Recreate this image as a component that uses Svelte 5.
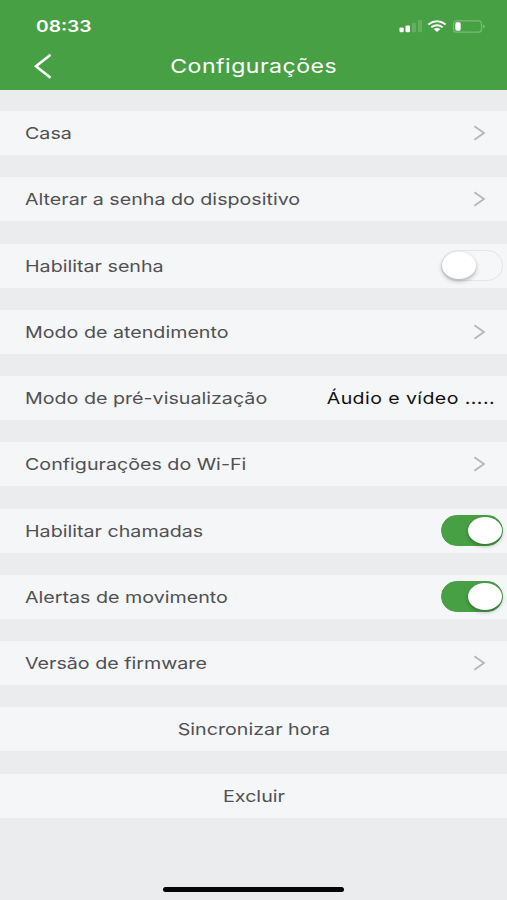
<!--
  Device settings screen: green status/title header, then a stack of setting bars.
  A bar ends in a chevron, a toggle or a value; the last two are centred actions.
-->
<script lang="ts">
  type Row = {
    label: string;
    kind: 'link' | 'toggle' | 'value' | 'action';
    on?: boolean;
    value?: string;
  };

  let rows = $state<Row[]>([
    { label: 'Casa', kind: 'link' },
    { label: 'Alterar a senha do dispositivo', kind: 'link' },
    { label: 'Habilitar senha', kind: 'toggle', on: false },
    { label: 'Modo de atendimento', kind: 'link' },
    { label: 'Modo de pré-visualização', kind: 'value', value: 'Áudio e vídeo .....' },
    { label: 'Configurações do Wi-Fi', kind: 'link' },
    { label: 'Habilitar chamadas', kind: 'toggle', on: true },
    { label: 'Alertas de movimento', kind: 'toggle', on: true },
    { label: 'Versão de firmware', kind: 'link' },
    { label: 'Sincronizar hora', kind: 'action' },
    { label: 'Excluir', kind: 'action' }
  ]);
</script>

<div class="screen">
  <header>
    <div class="status">
      <span class="time">08:33</span>
      <svg class="indicators" width="88" height="20" viewBox="0 0 88 20">
        <g fill="#fff">
          <rect x="0.5" y="11.4" width="4.2" height="4.8" rx="1.2" />
          <rect x="6.5" y="9.4" width="4.5" height="6.8" rx="1.2" />
          <rect x="13" y="7" width="4" height="9.2" rx="1" opacity="0.16" />
          <rect x="19" y="4" width="4" height="12.2" rx="1" opacity="0.16" />
          <path d="M34.6 12.9q3.4-2 6.8 0l-3.4 3z" />
        </g>
        <g fill="none" stroke="#fff" stroke-width="2">
          <path d="M29.3 8.5q8.7-6.4 17.4 0" />
          <path d="M32.3 11.2q5.7-4 11.4 0" />
        </g>
        <rect x="54.5" y="4.8" width="28" height="11.4" rx="3" fill="none" stroke="#fff" stroke-width="1.2" opacity="0.28" />
        <rect x="56.3" y="6.3" width="5.4" height="8.4" rx="1.6" fill="#fff" />
        <path d="M84.4 8.5q2.4 2 0 4z" fill="#fff" opacity="0.45" />
      </svg>
    </div>
    <div class="titlebar">
      <button class="back" aria-label="Voltar">
        <svg width="20" height="28" viewBox="0 0 20 28">
          <path d="M17.5 2.8 3 14.2l14.5 11.6" fill="none" stroke="#fff" stroke-width="2.6" />
        </svg>
      </button>
      <h1><span class="wide">Configurações</span></h1>
    </div>
  </header>

  <main>
    {#each rows as row (row.label)}
      <div class="row {row.kind}">
        <span class="label">{row.label}</span>
        {#if row.kind === 'link'}
          <svg class="chevron" width="14" height="18" viewBox="0 0 14 18">
            <path d="M2.4 2.2 12 9l-9.6 6.8" fill="none" stroke="#b5b6b8" stroke-width="1.8" />
          </svg>
        {:else if row.kind === 'toggle'}
          <button
            class="switch"
            class:on={row.on}
            role="switch"
            aria-checked={row.on}
            aria-label={row.label}
            onclick={() => (row.on = !row.on)}
          >
            <span class="knob"></span>
          </button>
        {:else if row.kind === 'value'}
          <span class="val">{row.value}</span>
        {/if}
      </div>
    {/each}
  </main>

  <footer><div class="home"></div></footer>
</div>

<style>
  :global(body) {
    margin: 0;
  }
  .screen {
    display: flex;
    flex-direction: column;
    height: 900px;
    overflow: hidden;
    background: #ebecee;
    font-family: Inter, 'Liberation Sans', sans-serif;
    color: #505153;
  }
  header {
    flex: none;
    height: 89.5px;
    box-sizing: border-box;
    padding-top: 12px;
    background: #48a045;
    color: #fff;
  }
  .status {
    display: flex;
    justify-content: space-between;
    align-items: center;
    height: 28px;
    padding: 0 20px 0 36px;
  }
  .time {
    font-size: 16px;
    font-weight: 600;
    transform: scaleX(1.2);
    transform-origin: left;
  }
  .indicators {
    display: block;
  }
  .titlebar {
    display: grid;
    grid-template-columns: 60px 1fr 60px;
    align-items: center;
    height: 52px;
  }
  .back {
    display: flex;
    padding: 0 0 0 33px;
    border: none;
    background: none;
  }
  h1 {
    margin: 0;
    font-size: 19px;
    font-weight: 400;
    text-align: center;
  }
  .wide {
    display: inline-block;
    letter-spacing: 0.4px;
    transform: scaleX(1.215);
  }
  main {
    display: flex;
    flex-direction: column;
    gap: 22.25px;
    padding-top: 21.6px;
  }
  .row {
    display: flex;
    align-items: center;
    justify-content: space-between;
    height: 44px;
    padding: 0 21.5px 0 25.4px;
    background: #f5f6f8;
    font-size: 16.5px;
    white-space: nowrap;
  }
  .label {
    transform: scaleX(1.192);
    transform-origin: left;
  }
  .row.toggle {
    padding-right: 4px;
  }
  .row.value {
    padding-right: 12.5px;
  }
  .row.action {
    justify-content: center;
    padding: 0;
  }
  .action .label {
    transform-origin: center;
  }
  .val {
    color: #111;
    letter-spacing: 0.35px;
    transform: scaleX(1.185);
    transform-origin: right;
  }
  .chevron {
    flex: none;
  }
  .switch {
    display: flex;
    align-items: center;
    width: 62px;
    height: 31px;
    box-sizing: border-box;
    padding: 0;
    border: 1.5px solid #e4e5e6;
    border-radius: 16px;
    background: #f6f7f8;
  }
  .knob {
    width: 34px;
    height: 27px;
    border-radius: 50%;
    background: #fff;
    box-shadow: 0 2px 4px rgba(0, 0, 0, 0.3);
  }
  .switch.on {
    justify-content: flex-end;
    border-color: #48a045;
    background: #48a045;
  }
  footer {
    display: flex;
    justify-content: center;
    margin-top: auto;
    padding-bottom: 8px;
  }
  .home {
    width: 181px;
    height: 5px;
    border-radius: 3px;
    background: #050505;
  }
</style>
